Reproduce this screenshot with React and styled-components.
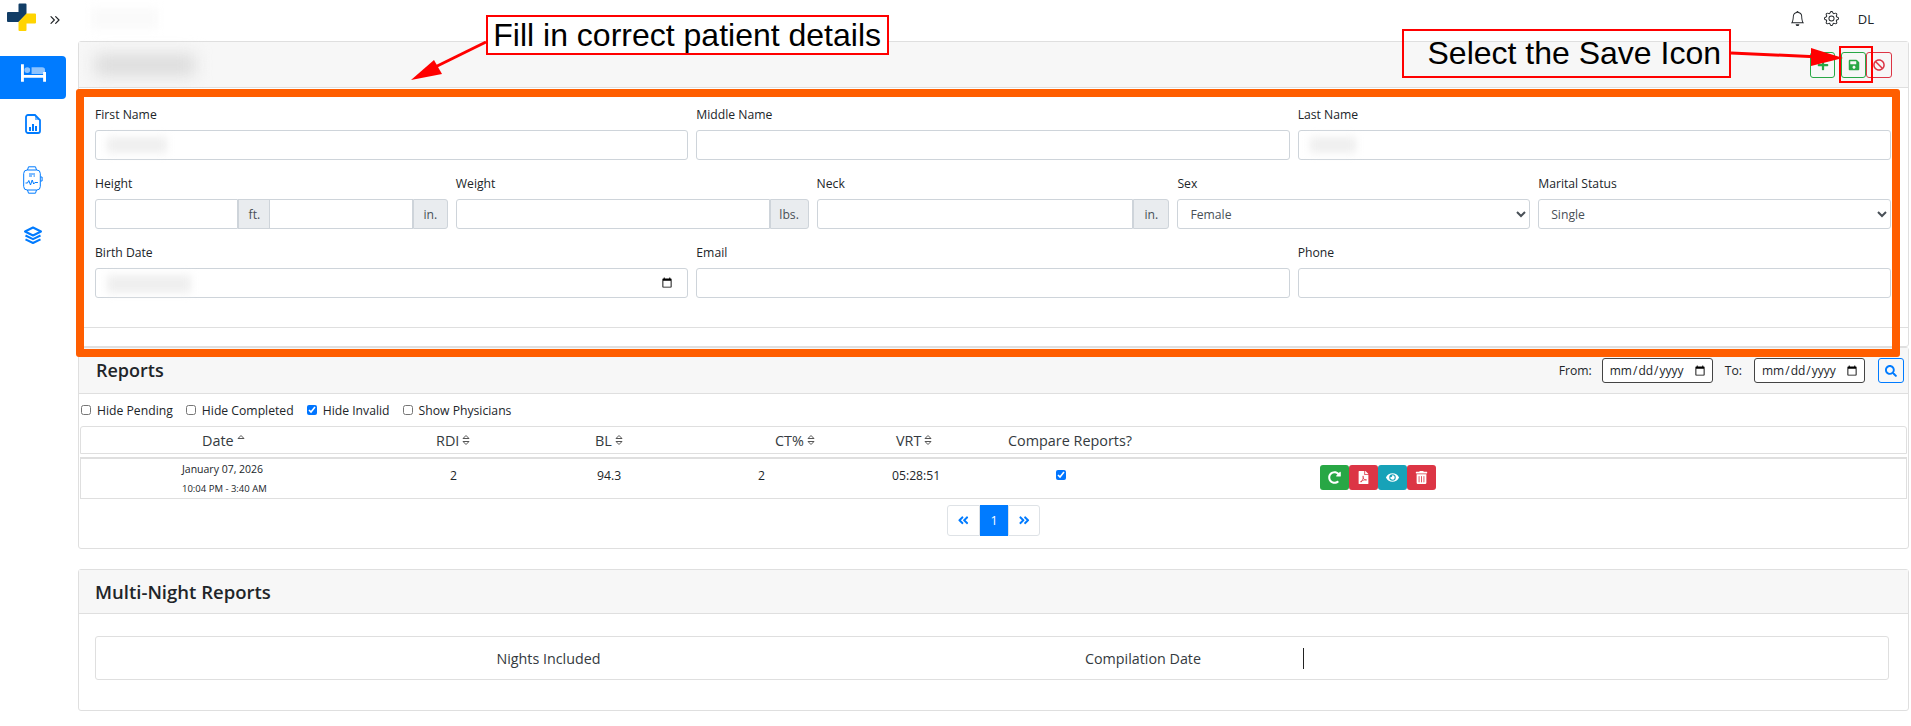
import styled, { createGlobalStyle } from 'styled-components'
import { ChevronsRight } from 'lucide-react'
import { BsBell, BsGear } from 'react-icons/bs'
import {
	FaPlus,
	FaSave,
	FaBan,
	FaSearch,
	FaRedoAlt,
	FaFilePdf,
	FaEye,
	FaTrashAlt,
	FaAngleDoubleLeft,
	FaAngleDoubleRight,
} from 'react-icons/fa'

const GlobalStyle = createGlobalStyle`
	* { box-sizing: border-box; }
	html, body { margin: 0; height: 726px; overflow: hidden; background: #fff; }
	body {
		font-family: "Open Sans", "Liberation Sans", sans-serif;
		font-size: 13px;
		color: #212529;
	}
`

const Page = styled.div`
	position: relative;
	display: flex;
	width: 1911px;
	height: 726px;
`

const Sidebar = styled.aside`
	width: 66px;
	flex-shrink: 0;
	display: flex;
	flex-direction: column;
`

const Brand = styled.div`
	height: 56px;
	padding: 3px 0 0 7px;
	display: flex;
	align-items: flex-start;
	gap: 10px;
	color: #212529;
	svg:last-child { margin-top: 9px; }
`

const Nav = styled.nav`
	display: flex;
	flex-direction: column;
	gap: 13px;
`

const NavItem = styled.a`
	height: 43px;
	display: flex;
	align-items: center;
	justify-content: center;
	border-radius: ${p => (p.$active ? '0 4px 4px 0' : '0')};
	background: ${p => (p.$active ? '#007bff' : 'transparent')};
	margin-bottom: ${p => (p.$active ? '-10px' : '0')};
	padding-bottom: ${p => (p.$active ? '10px' : '0')};
	color: #007bff;
`

const Main = styled.main`
	flex: 1;
	min-width: 0;
	padding: 0 2px 0 12px;
`

const Topbar = styled.header`
	height: 41px;
	display: flex;
	align-items: center;
	justify-content: space-between;
	padding: 0 35px 4px 13px;
`

const TopActions = styled.div`
	display: flex;
	align-items: center;
	gap: 19px;
	font-size: 13px;
	svg { font-size: 15px; }
`

const Blur = styled.span`
	display: block;
	width: ${p => p.$w}px;
	height: ${p => p.$h}px;
	background: ${p => p.$color || '#e6e6e6'};
	filter: blur(${p => p.$r || 4}px);
`

const FieldBlur = styled(Blur)`
	position: absolute;
	left: 12px;
	top: 7px;
	pointer-events: none;
`

const Card = styled.section`
	border: 1px solid #dfdfdf;
	border-radius: 3px;
	background: #fff;
	margin-bottom: ${p => p.$gap || 0}px;
`

const CardHeader = styled.div`
	height: ${p => p.$h || 46}px;
	background: #f7f7f7;
	border-bottom: 1px solid #dfdfdf;
	display: flex;
	align-items: center;
	justify-content: space-between;
	padding: ${p => p.$pad || '0 16px'};
`

const CardTitle = styled.h2`
	margin: 0 0 ${p => p.$mb || 0}px;
	font-size: ${p => p.$fs || 18}px;
	font-weight: 600;
	color: #212529;
`

const IconGroup = styled.div`
	display: flex;
	align-items: center;
`

const OutlineButton = styled.button`
	width: ${p => p.$w || 25}px;
	height: 26px;
	padding: 0;
	margin-left: ${p => p.$ml || 0}px;
	display: flex;
	align-items: center;
	justify-content: center;
	background: transparent;
	color: ${p => p.$color};
	border: 1px solid ${p => p.$color};
	border-radius: 3px;
	font-size: 12px;
`

const FormBody = styled.div`
	height: 239px;
	padding: 16px 17px 0 16px;
	display: flex;
	flex-direction: column;
	gap: 13px;
`

const FormRow = styled.div`
	display: grid;
	grid-template-columns: repeat(${p => p.$cols}, 1fr);
	gap: 8px;
`

const Field = styled.div`
	min-width: 0;
`

const Label = styled.label`
	display: block;
	height: 20px;
	margin-bottom: 6px;
	line-height: 22px;
	font-size: 12.2px;
	color: #212529;
`

const InputBox = styled.div`
	position: relative;
`

const TextInput = styled.input`
	display: block;
	width: 100%;
	height: 30px;
	padding: 0 12px;
	border: 1px solid #ced4da;
	border-radius: 3px;
	background: #fff;
	color: #495057;
	font: inherit;
	font-size: 12.2px;
`

const MaskedDate = styled(TextInput)`
	&::-webkit-datetime-edit { opacity: 0; }
`

const InputGroup = styled.div`
	display: flex;
	height: 30px;
`

const GroupInput = styled(TextInput)`
	flex: 1;
	min-width: 0;
	border-radius: ${p => (p.$first ? '3px 0 0 3px' : '0')};
	border-left-width: ${p => (p.$first ? '1px' : '0')};
`

const Addon = styled.span`
	width: ${p => p.$w}px;
	flex-shrink: 0;
	display: flex;
	align-items: center;
	justify-content: center;
	background: #e9ecef;
	border: 1px solid #ced4da;
	border-radius: ${p => (p.$last ? '0 3px 3px 0' : '0')};
	color: #495057;
	font-size: 12.2px;
`

const Select = styled.select`
	display: block;
	width: 100%;
	height: 30px;
	padding: 0 8px;
	border: 1px solid #ced4da;
	border-radius: 3px;
	background: #fff;
	color: #495057;
	font: inherit;
	font-size: 12.2px;
`

const CardFooter = styled.div`
	height: 19px;
	border-top: 1px solid #dfdfdf;
`

const DateFilters = styled.div`
	display: flex;
	align-items: center;
	font-size: 12.2px;
`

const DateLabel = styled.span`
	margin: 0 ${p => p.$mr}px 0 ${p => p.$ml}px;
`

const DateInput = styled.input`
	width: 111px;
	height: 25px;
	padding: 0 4px 0 6px;
	border: 1px solid #444;
	border-radius: 3px;
	background: #fff;
	color: #212529;
	font-family: inherit;
	font-size: 12px;
`

const SearchButton = styled(OutlineButton)`
	margin-left: 13px;
	width: 26px;
	height: 25px;
	border-radius: 3px;
`

const Filters = styled.div`
	height: 32px;
	padding: 1px 0 0 2px;
	display: flex;
	align-items: center;
	gap: 13px;
	font-size: 12.2px;
`

const FilterItem = styled.label`
	display: flex;
	align-items: center;
	gap: 6px;
	input { margin: 0 0 2px; width: 10px; height: 10px; }
`

const HeadRow = styled.div`
	height: 28px;
	margin: 0 1px;
	padding-left: 121px;
	display: grid;
	grid-template-columns: 234px 159px 180px 121px 112px 1fr;
	align-items: center;
	border: 1px solid #dfdfdf;
	border-radius: 3px 3px 0 0;
	font-size: 14.4px;
	color: #343a40;
`

const HeadCell = styled.span`
	display: flex;
	align-items: center;
	gap: 3px;
`

const BodyRow = styled.div`
	height: 42px;
	margin: 3px 1px 0;
	padding-left: 101px;
	display: grid;
	grid-template-columns: 268px 147px 161px 134px 164px 264px 1fr;
	align-items: center;
	border: 1px solid #dfdfdf;
	border-top-width: 2px;
	font-size: 12.2px;
	font-weight: 500;
	color: #212529;
`

const ValueCell = styled.span`
	margin-bottom: 6px;
`

const DateStack = styled.div`
	display: flex;
	flex-direction: column;
	gap: 6px;
	font-size: 10.5px;
	font-weight: 400;
	line-height: 13px;
`

const TimeRange = styled.span`
	font-size: 9.5px;
`

const CompareBox = styled.input`
	margin: 0 0 8px;
	width: 10px;
	height: 10px;
`

const Actions = styled.div`
	display: flex;
	margin-bottom: 2px;
`

const ActionButton = styled.button`
	width: 29px;
	height: 25px;
	padding: 0;
	display: flex;
	align-items: center;
	justify-content: center;
	background: ${p => p.$bg};
	color: #fff;
	border: none;
	border-radius: 3px;
	font-size: 13px;
`

const Pager = styled.div`
	display: flex;
	justify-content: center;
	padding: 6px 0 12px;
`

const PageLink = styled.a`
	width: ${p => p.$w}px;
	height: 31px;
	display: flex;
	align-items: center;
	justify-content: center;
	border: 1px solid #dee2e6;
	background: ${p => (p.$active ? '#007bff' : '#fff')};
	border-color: ${p => (p.$active ? '#007bff' : '#dee2e6')};
	color: ${p => (p.$active ? '#fff' : '#007bff')};
	border-radius: ${p => p.$radius || '0'};
	font-size: 12.5px;
	font-weight: 500;
`

const MultiBody = styled.div`
	padding: 22px 19px 30px 16px;
`

const MultiTable = styled.div`
	height: 44px;
	display: grid;
	grid-template-columns: 905px 284px 1fr;
	align-items: center;
	text-align: center;
	border: 1px solid #dfdfdf;
	border-radius: 3px;
	font-size: 14.3px;
	color: #343a40;
`

const Caret = styled.i`
	display: block;
	width: 1px;
	height: 21px;
	margin-left: 18px;
	background: #222;
`

/* screenshot mark-up, drawn over the page */
const Frame = styled.div`
	position: absolute;
	left: 76px;
	top: 89px;
	width: 1824px;
	height: 268px;
	border: 8px solid #ff5e00;
	border-radius: 3px;
	pointer-events: none;
`

const Callout = styled.div`
	position: absolute;
	left: ${p => p.$x}px;
	top: ${p => p.$y}px;
	width: ${p => p.$w}px;
	height: ${p => p.$h}px;
	display: flex;
	align-items: center;
	justify-content: flex-end;
	padding-right: ${p => p.$pr}px;
	border: 2px solid #ff0000;
	background: ${p => p.$bg || 'transparent'};
	font-family: "Liberation Sans", Arial, sans-serif;
	font-size: ${p => p.$fs}px;
	color: #000;
	white-space: nowrap;
`

const ArrowLayer = styled.svg`
	position: absolute;
	inset: 0;
	pointer-events: none;
`

const Logo = () => (
	<svg width="30" height="29" viewBox="0 0 30 29">
		<path fill="#113d66" d="M11.500 1.500a1 1 0 0 1 1-1h6a1 1 0 0 1 1 1v9.500l-8 8V19H1a1 1 0 0 1-1-1v-8a1 1 0 0 1 1-1h10.500z" />
		<path fill="#ffd400" d="M19.500 10.500H28a1 1 0 0 1 1 1v8a1 1 0 0 1-1 1h-8.500V27a1 1 0 0 1-1 1h-6a1 1 0 0 1-1-1v-8z" />
	</svg>
)

const BedIcon = () => (
	<svg width="25" height="18" viewBox="0 0 26 18">
		<path fill="#fff" d="M1 0h2v11h20V8h3v10h-3v-4H3v4H0V0z" />
		<circle cx="6.500" cy="6" r="3" fill="#fff" opacity=".55" />
		<path fill="#fff" opacity=".55" d="M11 3h11a3 3 0 0 1 3 3v4H11z" />
	</svg>
)

const ReportIcon = () => (
	<svg width="16" height="20" viewBox="0 0 16 20">
		<path fill="none" stroke="currentColor" strokeWidth="1.800" d="M3 1h7l5 5v11a2 2 0 0 1-2 2H3a2 2 0 0 1-2-2V3a2 2 0 0 1 2-2z" />
		<path fill="currentColor" opacity=".55" d="M10 1l5 5h-5z" />
		<path fill="currentColor" d="M4 13h2v4H4zM7 10h2v7H7zM10 12h2v5h-2z" />
	</svg>
)

const WatchIcon = () => (
	<svg width="20" height="28" viewBox="0 0 20 28" fill="none" stroke="currentColor" strokeWidth="1">
		<path d="M4.500 4l1-3.200h7l1 3.200M4.500 24l1 3.200h7l1-3.200" />
		<rect x="0.700" y="4" width="16.600" height="20" rx="3.500" />
		<path d="M17.500 11h1.600v4h-1.600" />
		<path d="M6 8h6M6 10h3M10.500 10H12" />
		<path d="M2.500 17h2l1.300-2.500 1.700 4.500 1.700-5 1.500 4 1.200-1.500h3" />
	</svg>
)

const LayersIcon = () => (
	<svg width="20" height="19" viewBox="0 0 20 19" fill="none" stroke="currentColor" strokeWidth="2" strokeLinejoin="round">
		<path d="M10 1.500l8 4-8 4-8-4z" />
		<path d="M2.500 9.500l7.500 3.700 7.500-3.700" />
		<path d="M2.500 13.300l7.500 3.700 7.500-3.700" />
	</svg>
)

const SortIcon = ({ single }) => (
	<svg width="8" height="12" viewBox="0 0 8 12" fill="none" stroke="#555" strokeWidth="1">
		<path d="M1 4.500L4 1.500l3 3z" />
		{!single && <path d="M1 7.500l3 3 3-3z" />}
	</svg>
)

const columns = [
	['Date', true],
	['RDI'],
	['BL'],
	['CT%'],
	['VRT'],
]

const App = () => {
	return (
		<Page>
			<GlobalStyle />
			<Sidebar>
				<Brand>
					<Logo />
					<ChevronsRight size={16} strokeWidth={1.8} />
				</Brand>
				<Nav>
					<NavItem $active><BedIcon /></NavItem>
					<NavItem><ReportIcon /></NavItem>
					<NavItem><WatchIcon /></NavItem>
					<NavItem><LayersIcon /></NavItem>
				</Nav>
			</Sidebar>

			<Main>
				<Topbar>
					<Blur $w={67} $h={21} $color="#fafafa" />
					<TopActions>
						<BsBell />
						<BsGear />
						<span>DL</span>
					</TopActions>
				</Topbar>

				<Card>
					<CardHeader $pad="0 16px 0 16px">
						<Blur $w={100} $h={22} $color="#dcdcdc" $r={8} />
						<IconGroup>
							<OutlineButton $color="#28a745"><FaPlus /></OutlineButton>
							<OutlineButton $color="#28a745" $ml={6}><FaSave /></OutlineButton>
							<OutlineButton $color="#dc3545" $w={26}><FaBan /></OutlineButton>
						</IconGroup>
					</CardHeader>
					<FormBody>
						<FormRow $cols={3}>
							<Field>
								<Label>First Name</Label>
								<InputBox>
									<TextInput />
									<FieldBlur $w={60} $h={16} $color="#efefef" />
								</InputBox>
							</Field>
							<Field>
								<Label>Middle Name</Label>
								<TextInput />
							</Field>
							<Field>
								<Label>Last Name</Label>
								<InputBox>
									<TextInput />
									<FieldBlur $w={46} $h={16} $color="#efefef" />
								</InputBox>
							</Field>
						</FormRow>
						<FormRow $cols={5}>
							<Field>
								<Label>Height</Label>
								<InputGroup>
									<GroupInput $first />
									<Addon $w={32}>ft.</Addon>
									<GroupInput />
									<Addon $w={35} $last>in.</Addon>
								</InputGroup>
							</Field>
							<Field>
								<Label>Weight</Label>
								<InputGroup>
									<GroupInput $first />
									<Addon $w={39} $last>lbs.</Addon>
								</InputGroup>
							</Field>
							<Field>
								<Label>Neck</Label>
								<InputGroup>
									<GroupInput $first />
									<Addon $w={36} $last>in.</Addon>
								</InputGroup>
							</Field>
							<Field>
								<Label>Sex</Label>
								<Select defaultValue="Female">
									<option>Female</option>
									<option>Male</option>
								</Select>
							</Field>
							<Field>
								<Label>Marital Status</Label>
								<Select defaultValue="Single">
									<option>Single</option>
									<option>Married</option>
								</Select>
							</Field>
						</FormRow>
						<FormRow $cols={3}>
							<Field>
								<Label>Birth Date</Label>
								<InputBox>
									<MaskedDate type="date" />
									<FieldBlur $w={84} $h={18} $color="#efefef" />
								</InputBox>
							</Field>
							<Field>
								<Label>Email</Label>
								<TextInput />
							</Field>
							<Field>
								<Label>Phone</Label>
								<TextInput />
							</Field>
						</FormRow>
					</FormBody>
					<CardFooter />
				</Card>

				<Card $gap={20}>
					<CardHeader $pad="0 4px 0 17px">
						<CardTitle $mb={2}>Reports</CardTitle>
						<DateFilters>
							<DateLabel $ml={0} $mr={10}>From:</DateLabel>
							<DateInput type="date" />
							<DateLabel $ml={12} $mr={12}>To:</DateLabel>
							<DateInput type="date" />
							<SearchButton $color="#007bff"><FaSearch /></SearchButton>
						</DateFilters>
					</CardHeader>
					<Filters>
						<FilterItem><input type="checkbox" />Hide Pending</FilterItem>
						<FilterItem><input type="checkbox" />Hide Completed</FilterItem>
						<FilterItem><input type="checkbox" defaultChecked />Hide Invalid</FilterItem>
						<FilterItem><input type="checkbox" />Show Physicians</FilterItem>
					</Filters>
					<HeadRow>
						{columns.map(([name, single]) => (
							<HeadCell key={name}>{name}<SortIcon single={single} /></HeadCell>
						))}
						<HeadCell>Compare Reports?</HeadCell>
					</HeadRow>
					<BodyRow>
						<DateStack>
							<span>January 07, 2026</span>
							<TimeRange>10:04 PM - 3:40 AM</TimeRange>
						</DateStack>
						<ValueCell>2</ValueCell>
						<ValueCell>94.3</ValueCell>
						<ValueCell>2</ValueCell>
						<ValueCell>05:28:51</ValueCell>
						<CompareBox type="checkbox" defaultChecked />
						<Actions>
							<ActionButton $bg="#28a745"><FaRedoAlt /></ActionButton>
							<ActionButton $bg="#dc3545"><FaFilePdf /></ActionButton>
							<ActionButton $bg="#17a2b8"><FaEye /></ActionButton>
							<ActionButton $bg="#dc3545"><FaTrashAlt /></ActionButton>
						</Actions>
					</BodyRow>
					<Pager>
						<PageLink $w={33} $radius="3px 0 0 3px"><FaAngleDoubleLeft /></PageLink>
						<PageLink $w={28} $active>1</PageLink>
						<PageLink $w={32} $radius="0 3px 3px 0"><FaAngleDoubleRight /></PageLink>
					</Pager>
				</Card>

				<Card>
					<CardHeader $h={44} $pad="0 17px 0 16px">
						<CardTitle $fs={18.5}>Multi-Night Reports</CardTitle>
					</CardHeader>
					<MultiBody>
						<MultiTable>
							<span>Nights Included</span>
							<span>Compilation Date</span>
							<Caret />
						</MultiTable>
					</MultiBody>
				</Card>
			</Main>

			<Frame />
			<Callout $x={486} $y={15} $w={403} $h={40} $fs={32} $pr={6} $bg="#fff">Fill in correct patient details</Callout>
			<Callout $x={1402} $y={29} $w={329} $h={49} $fs={32} $pr={8}>Select the Save Icon</Callout>
			<Callout $x={1839} $y={46} $w={34} $h={37} />
			<ArrowLayer width="1911" height="726" viewBox="0 0 1911 726">
				<path stroke="#f00" strokeWidth="3" d="M486 42L425 72" />
				<path fill="#f00" d="M411 80L434 60L442 74z" />
				<path stroke="#f00" strokeWidth="3" d="M1731 53L1820 57" />
				<path fill="#f00" d="M1843 58L1811 48L1811 66z" />
			</ArrowLayer>
		</Page>
	)
}

export default App
